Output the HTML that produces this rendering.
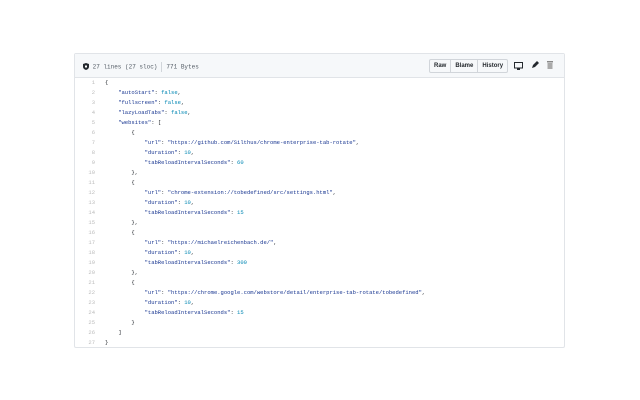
<!DOCTYPE html>
<html><head><meta charset="utf-8"><style>
body{margin:0;width:640px;height:400px;background:#fff;font-family:"Liberation Sans",sans-serif;position:relative;overflow:hidden}
.box{position:absolute;left:74px;top:53px;width:489px;height:293px;border:1px solid #e1e4e8;border-radius:2px}
.hd{height:23px;background:#f6f8fa;border-bottom:1px solid #e1e4e8;position:relative;font-size:6.3px;color:#586069}
.info{position:absolute;left:8px;top:8px;font-family:"Liberation Mono",monospace;font-size:6px}
.sep{display:inline-block;width:1px;height:10px;background:#d1d5da;vertical-align:middle;margin:0 4px}
.btns{position:absolute;left:354px;top:5px;display:flex;border:1px solid #d1d5da;border-radius:2px;background:#f6f8fa}
.btns span{padding:0 4px;height:12px;line-height:12px;font-size:6px;color:#24292e;font-weight:bold;border-left:1px solid #d1d5da}
.btns span:first-child{border-left:none}
.code{position:absolute;left:0;font-family:"Liberation Mono",monospace;font-size:5.5px;line-height:10px;white-space:pre}
.ln{position:absolute;left:0;width:20px;text-align:right;color:#bbb}
.tx{position:absolute;left:30px;color:#24292e}
.s{color:#183691}.n{color:#0086b3}
</style></head><body>
<div class="box">
<div class="hd">
<div class="info"><svg width="6" height="7" viewBox="0 0 12 14" style="vertical-align:-1px"><path d="M6 0L0 2v5c0 4 3 6 6 7 3-1 6-3 6-7V2z" fill="#24292e"/><path d="M4 5h4v4H4z" fill="#fff"/></svg> 27 lines (27 sloc)<span class="sep"></span>771 Bytes</div>
<div class="btns"><span>Raw</span><span>Blame</span><span>History</span></div>
<svg style="position:absolute;left:439px;top:8px" width="9" height="8" viewBox="0 0 9 8"><rect x="0.5" y="0.5" width="8" height="5.5" fill="none" stroke="#24292e"/><rect x="3" y="6.5" width="3" height="1.5" fill="#24292e"/></svg>
<svg style="position:absolute;left:456px;top:7px" width="8" height="8" viewBox="0 0 8 8"><path d="M1 7l1-3 4-4 2 2-4 4z" fill="#24292e"/></svg>
<svg style="position:absolute;left:472px;top:7px" width="6" height="8" viewBox="0 0 6 8"><rect x="0" y="0" width="6" height="1.5" fill="#888"/><rect x="0.5" y="2" width="5" height="6" fill="#aaa"/></svg>
</div>
<div class="code" style="top:24px;width:100%">
<div class="ln" style="top:0">1
2
3
4
5
6
7
8
9
10
11
12
13
14
15
16
17
18
19
20
21
22
23
24
25
26
27</div>
<div class="tx" style="top:0">{
    <span class="s">"autoStart"</span>: <span class="n">false</span>,
    <span class="s">"fullscreen"</span>: <span class="n">false</span>,
    <span class="s">"lazyLoadTabs"</span>: <span class="n">false</span>,
    <span class="s">"websites"</span>: [
        {
            <span class="s">"url"</span>: <span class="s">"https://github.com/Silthus/chrome-enterprise-tab-rotate"</span>,
            <span class="s">"duration"</span>: <span class="n">10</span>,
            <span class="s">"tabReloadIntervalSeconds"</span>: <span class="n">60</span>
        },
        {
            <span class="s">"url"</span>: <span class="s">"chrome-extension://tobedefined/src/settings.html"</span>,
            <span class="s">"duration"</span>: <span class="n">10</span>,
            <span class="s">"tabReloadIntervalSeconds"</span>: <span class="n">15</span>
        },
        {
            <span class="s">"url"</span>: <span class="s">"https://michaelreichenbach.de/"</span>,
            <span class="s">"duration"</span>: <span class="n">10</span>,
            <span class="s">"tabReloadIntervalSeconds"</span>: <span class="n">300</span>
        },
        {
            <span class="s">"url"</span>: <span class="s">"https://chrome.google.com/webstore/detail/enterprise-tab-rotate/tobedefined"</span>,
            <span class="s">"duration"</span>: <span class="n">10</span>,
            <span class="s">"tabReloadIntervalSeconds"</span>: <span class="n">15</span>
        }
    ]
}</div>
</div>
</div>
</body></html>
